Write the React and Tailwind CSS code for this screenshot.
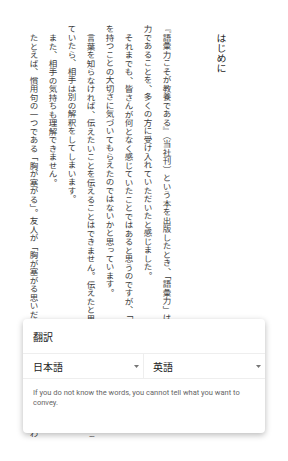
const columns = [
  {
    indent: false,
    lines: [
      "『語彙力こそが教養である』（当社刊）という本を出版したとき、「語彙力」は社会を生きる上で大切な",
      "力であることを、多くの方に受け入れていただいたと感じました。",
    ],
  },
  {
    indent: true,
    lines: [
      "それまでも、皆さんが何となく感じていたことではあると思うのですが、「語彙力」という言葉で、語彙",
      "を持つことの大切さに気づいてもらえたのではないかと思っています。",
    ],
  },
  {
    indent: true,
    lines: [
      "言葉を知らなければ、伝えたいことを伝えることはできません。伝えたと思っていても、違う意味で伝わっ",
      "ていたら、相手は別の解釈をしてしまいます。",
    ],
  },
  {
    indent: true,
    lines: ["また、相手の気持ちも理解できません。"],
  },
  {
    indent: true,
    lines: [
      "たとえば、慣用句の一つである「胸が塞がる」。友人が「胸が塞がる思いだ」と言ったとき、その意味がわ",
    ],
  },
];

function Caret() {
  return (
    <svg width="5" height="3" viewBox="0 0 5 3" className="shrink-0">
      <path d="M0 0h5L2.5 3z" fill="#757575" />
    </svg>
  );
}

export default function App() {
  return (
    <div className="relative h-[461px] w-[288px] overflow-hidden bg-white font-['Noto_Sans_CJK_JP',sans-serif] text-[#3a3a3a]">
      <article className="h-[437px] w-full overflow-hidden pt-[25px] pr-[57px] [writing-mode:vertical-rl] [text-rendering:geometricPrecision]">
        <h1 className="ml-[36px] indent-[8px] text-[10px] leading-[19px] font-normal text-[#222]">
          はじめに
        </h1>
        {columns.map((p, i) => (
          <p
            key={i}
            className={
              p.indent
                ? "whitespace-nowrap indent-[8.5px] text-[8.5px] leading-[19px]"
                : "whitespace-nowrap text-[8.5px] leading-[19px]"
            }
          >
            {p.lines.map((line, j) => (
              <span key={j}>
                {line}
                {j < p.lines.length - 1 && <br />}
              </span>
            ))}
          </p>
        ))}
      </article>

      <div className="absolute left-[23px] top-[319px] w-[242px] rounded-[4px] bg-white shadow-[0_2px_6px_rgba(0,0,0,0.28)]">
        <div className="flex h-[35px] items-center border-b border-[#eeeeee] px-[10px] text-[10px] text-[#222]">
          翻訳
        </div>
        <div className="grid h-[25px] grid-cols-2 border-b border-[#eeeeee] text-[10px] text-[#222]">
          <div className="flex items-center justify-between border-r border-[#eeeeee] pl-[10px] pr-[4px]">
            <span>日本語</span>
            <Caret />
          </div>
          <div className="flex items-center justify-between pl-[9px] pr-[4px]">
            <span>英語</span>
            <Caret />
          </div>
        </div>
        <p className="px-[10px] pt-[9px] pb-[25px] font-['Roboto',sans-serif] text-[7.5px] leading-[10px] text-[#666]">
          If you do not know the words, you cannot tell what you want to convey.
        </p>
      </div>
    </div>
  );
}
